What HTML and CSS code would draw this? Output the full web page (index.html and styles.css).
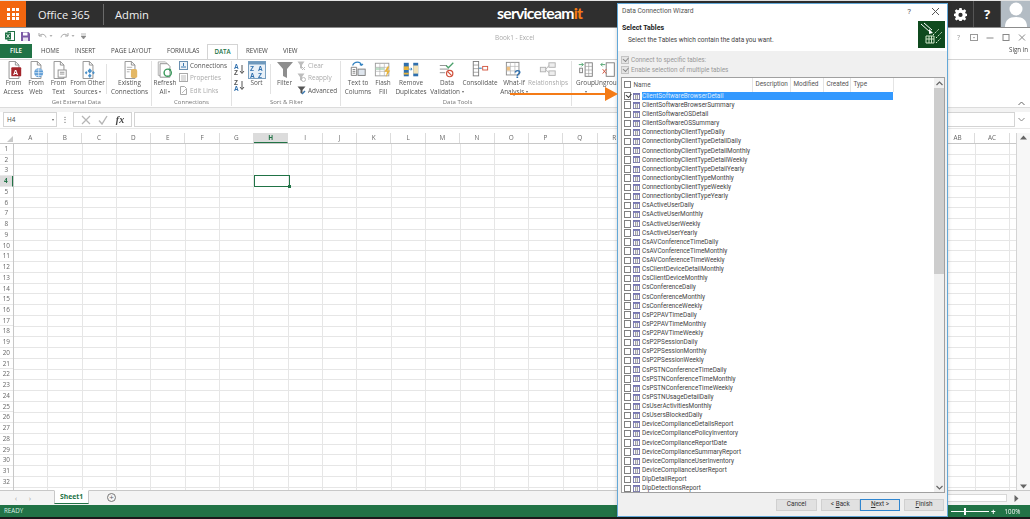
FILE: index.html
```html
<!DOCTYPE html>
<html lang="en">
<head>
<meta charset="utf-8">
<title>Book1 - Excel</title>
<link rel="stylesheet" href="styles.css">
</head>
<body>
<svg class="defs" width="0" height="0" aria-hidden="true">
  <symbol id="t" viewBox="0 0 8 8"><rect x=".5" y=".5" width="7" height="7" fill="#fff" stroke="#7272a8"/><rect x=".5" y=".5" width="7" height="1.6" fill="#6c6cb0"/><path d="M3 2v5.500M5 2v5.500" stroke="#8a8a8a"/></symbol>
  <symbol id="page" viewBox="0 0 18 20"><path d="M3.500.5h7l4 4v15h-11z" fill="#fff" stroke="#8a8a8a"/><path d="M10.500.5v4h4" fill="none" stroke="#8a8a8a"/></symbol>
</svg>
<div class="screen">
  <header class="suite">
    <div class="waffle"><span></span><span></span><span></span><span></span><span></span><span></span><span></span><span></span><span></span></div>
    <div class="suite-name">Office 365</div>
    <div class="suite-app">Admin</div>
    <div class="brand">serviceteam<b>it</b></div>
    <div class="suite-icons">
      <div class="suite-btn"><svg width="13" height="13" viewBox="0 0 16 16"><path d="M6.600 0h2.800l.4 2.200 1.300.6 1.900-1.300 2 2-1.300 1.900.6 1.300 2.200.4v2.800l-2.200.4-.6 1.300 1.300 1.900-2 2-1.900-1.300-1.300.6-.4 2.200H6.600l-.4-2.200-1.300-.6L3 15.500l-2-2 1.300-1.900-.6-1.300L-.5 9.900V7.100l2.200-.4.6-1.300L1 3.500l2-2 1.900 1.300 1.300-.6z" fill="#fff"/><circle cx="8" cy="8.500" r="2.600" fill="#2f2f2f"/></svg></div>
      <div class="suite-btn help">?</div>
      <div class="avatar"><svg width="26" height="27" viewBox="0 0 26 27"><circle cx="13" cy="9" r="6.500" fill="#fff"/><path d="M2 27c0-7 4-10 11-10s11 3 11 10z" fill="#fff"/></svg></div>
    </div>
  </header>

  <div class="qat">
    <svg class="q-x" width="10" height="10" viewBox="0 0 10 10"><rect x="3" y=".5" width="6.500" height="9" fill="#fff" stroke="#217346"/><rect y="1.500" width="6" height="7" fill="#217346"/><path d="M1.500 3l3 4M4.500 3l-3 4" stroke="#fff" stroke-width=".8"/></svg>
    <svg class="q-s" width="9" height="9" viewBox="0 0 9 9"><path d="M0 0h7.500L9 1.500V9H0z" fill="#7d5aa6"/><rect x="2" y=".5" width="4.500" height="3" fill="#fff"/><rect x="2" y="5.500" width="5" height="3.500" fill="#e8e0f0"/></svg>
    <svg class="q-u" width="22" height="8" viewBox="0 0 22 8"><path d="M2 1v3h3M2.200 4C4 1.500 8 1.500 9 5.500" fill="none" stroke="#a8a8a8"/><path d="M12.500 3h3l-1.500 2z" fill="#b0b0b0"/></svg>
    <svg class="q-r" width="22" height="8" viewBox="0 0 22 8"><path d="M9 1v3H6M8.800 4C7 1.500 3 1.500 2 5.500" fill="none" stroke="#a8a8a8"/><path d="M12.500 3h3l-1.500 2z" fill="#b0b0b0"/></svg>
    <svg class="q-m" width="5" height="6" viewBox="0 0 5 6"><path d="M0 1h5M0 3h5l-2.500 3z" fill="#888" stroke="#888" stroke-width=".6"/></svg>
    <div class="doc-title">Book1 - Excel</div>
    <div class="win-btns">
      <span>?</span>
      <svg width="8" height="7" viewBox="0 0 8 7"><rect x=".5" y=".5" width="7" height="6" fill="#fff" stroke="#999"/><path d="M3 3h2L4 4.500z" fill="#888"/></svg>
      <svg width="8" height="7" viewBox="0 0 7 7"><path d="M0 4h7" stroke="#888"/></svg>
      <svg width="8" height="7" viewBox="0 0 7 7"><rect x=".5" y=".5" width="6" height="6" fill="none" stroke="#888"/></svg>
      <svg width="8" height="7" viewBox="0 0 7 7"><path d="M.5.5l6 6M6.500.5l-6 6" stroke="#888"/></svg>
    </div>
  </div>

  <nav class="tabs">
    <span class="tab-file">FILE</span>
    <span class="tab t-home">HOME</span>
    <span class="tab t-ins">INSERT</span>
    <span class="tab t-page">PAGE LAYOUT</span>
    <span class="tab t-form">FORMULAS</span>
    <span class="tab t-data">DATA</span>
    <span class="tab t-rev">REVIEW</span>
    <span class="tab t-view">VIEW</span>
    <span class="signin">Sign in</span>
  </nav>

  <section class="ribbon">
    <div class="group g-ext">
      <div class="items">
        <div class="rb w23"><svg class="ic" viewBox="0 0 18 20"><use href="#page"/><rect x="6" y="7" width="11" height="10" rx="1" fill="#a4262c"/><text x="8" y="15" class="ic-t">A</text></svg><span>From<br>Access</span></div>
        <div class="rb w22"><svg class="ic" viewBox="0 0 18 20"><use href="#page"/><circle cx="12" cy="13" r="5" fill="#5b9bd5"/><path d="M7 13h10M12 8v10M8.500 10h7M8.500 16h7" stroke="#fff" stroke-width=".7"/></svg><span>From<br>Web</span></div>
        <div class="rb w23"><svg class="ic" viewBox="0 0 18 20"><use href="#page"/><rect x="8" y="10" width="9" height="8" fill="#fff" stroke="#8a8a8a"/><path d="M10 12.500h5M10 14.500h5" stroke="#8a8a8a"/></svg><span>From<br>Text</span></div>
        <div class="rb w35"><svg class="ic" viewBox="0 0 18 20"><use href="#page"/><path d="M11 8l2.500 3-2.500 3-2.500-3zM11 14l2 2.500-2 2.500-2-2.500zM7 11l1.500 2L7 15l-1.500-2zM15 11l1.500 2-1.500 2-1.500-2z" fill="#4a90c8"/></svg><span>From Other<br>Sources <i class="dd"></i></span></div>
        <div class="vsep"></div>
        <div class="rb w43"><svg class="ic" viewBox="0 0 18 20"><use href="#page"/><path d="M5.500 7h6M5.500 9.500h6M5.500 12h3" stroke="#aaa"/><rect x="10" y="9" width="7" height="10" rx="2" fill="#e3b764"/></svg><span>Existing<br>Connections</span></div>
      </div>
      <div class="g-label">Get External Data</div>
    </div>

    <div class="group g-conn">
      <div class="items">
        <div class="rb w25"><svg class="ic" viewBox="0 0 18 20"><path d="M1.500 1h8l3 3v12h-11z" fill="#fff" stroke="#aaa"/><path d="M3.500 3h8l3 3v12h-11z" fill="#fff" stroke="#8a8a8a"/><circle cx="12" cy="13" r="4" fill="none" stroke="#3a9a5c" stroke-width="1.600"/><path d="M13 8l3 1.500-2 2z" fill="#3a9a5c"/></svg><span>Refresh<br>All <i class="dd"></i></span></div>
        <ul class="small-list">
          <li><svg viewBox="0 0 9 9"><rect x=".5" y=".5" width="8" height="8" fill="#eef3f8" stroke="#6a8fb0"/><path d="M2 6h5M4.500 2v3" stroke="#3a78b0"/></svg>Connections</li>
          <li class="off"><svg viewBox="0 0 9 9"><rect x=".5" y=".5" width="8" height="8" fill="#fff" stroke="#aaa"/><path d="M2 3h5M2 5h5M2 7h5" stroke="#bbb"/></svg>Properties</li>
          <li class="off"><svg viewBox="0 0 9 9"><path d="M1.500.5h4l2 2v6h-6z" fill="#fff" stroke="#aaa"/><path d="M3 7l4-4" stroke="#bbb"/></svg>Edit Links</li>
        </ul>
      </div>
      <div class="g-label">Connections</div>
    </div>

    <div class="group g-sort">
      <div class="items">
        <div class="az">
          <svg viewBox="0 0 11 11"><text x="0" y="5" class="mini blue">A</text><text x="0" y="10.500" class="mini">Z</text><path d="M8 1v8M6 7l2 2.500L10 7" fill="none" stroke="#555"/></svg>
          <svg viewBox="0 0 11 11"><text x="0" y="5" class="mini">Z</text><text x="0" y="10.500" class="mini blue">A</text><path d="M8 1v8M6 7l2 2.500L10 7" fill="none" stroke="#555"/></svg>
        </div>
        <div class="rb w20"><svg class="ic" viewBox="0 0 18 18"><rect x=".5" y=".5" width="17" height="17" fill="#e9f1f8" stroke="#7aa0c0"/><rect x=".5" y=".5" width="17" height="3" fill="#6f99bd"/><text x="2" y="10" class="mini blue">Z</text><text x="10" y="10" class="mini blue">A</text><text x="2" y="16.500" class="mini blue">A</text><text x="10" y="16.500" class="mini blue">Z</text></svg><span>Sort</span></div>
        <div class="vsep s2"></div>
        <div class="rb w22 filt"><svg class="ic" viewBox="0 0 18 18"><path d="M1 1h16l-6 7v9l-4-2V8z" fill="#8e8e8e"/></svg><span>Filter</span></div>
        <ul class="small-list sl2">
          <li class="off"><svg viewBox="0 0 9 9"><path d="M.5.5h7L5 4v4L3 7V4z" fill="#bdbdbd"/><path d="M5 6l3 3M8 6L5 9" stroke="#bbb"/></svg>Clear</li>
          <li class="off"><svg viewBox="0 0 9 9"><path d="M.5.5h7L5 4v4L3 7V4z" fill="#bdbdbd"/><circle cx="6.500" cy="6.500" r="2" fill="none" stroke="#bbb"/></svg>Reapply</li>
          <li><svg viewBox="0 0 9 9"><path d="M.5.5h8L5.500 4v4L3.500 7V4z" fill="#555"/><path d="M5 8l3-3" stroke="#3a78b0" stroke-width="1.400"/></svg>Advanced</li>
        </ul>
      </div>
      <div class="g-label">Sort &amp; Filter</div>
    </div>

    <div class="group g-tools">
      <div class="items">
        <div class="rb w27"><svg class="ic" viewBox="0 0 18 20"><path d="M1.500 7h6v9h-6z" fill="#fff" stroke="#7a7a7a"/><path d="M3 9.500h3M3 11.500h3M3 13.500h3" stroke="#7a7a7a"/><rect x="9" y="9" width="8" height="7" fill="#dfe6ee" stroke="#7a7a7a"/><path d="M3 5c2-5 9-5 10 0M13 5l-2-1M13 5l1.500-1.800" fill="none" stroke="#2f80c0" stroke-width="1.300"/></svg><span>Text to<br>Columns</span></div>
        <div class="rb w23"><svg class="ic" viewBox="0 0 18 20"><rect x=".5" y="2.500" width="15" height="14" fill="#fff" stroke="#9a9a9a"/><rect x="1" y="7" width="9" height="3" fill="#bfe0c8"/><path d="M5.500 2.500v14M10.500 2.500v14M.5 7h15M.5 11.500h15" stroke="#b0b0b0" stroke-width=".7"/><path d="M14 6l-3.500 6h3L12 18l5-7.500h-3l2-4.500z" fill="#e8b33a"/></svg><span>Flash<br>Fill</span></div>
        <div class="rb w33"><svg class="ic" viewBox="0 0 18 20"><rect x="1" y="2" width="5.500" height="15" fill="#2f6fad"/><rect x="11.500" y="2" width="5.500" height="15" fill="#2f6fad"/><rect x="1" y="6" width="5.500" height="4" fill="#e8b33a"/><rect x="11.500" y="5" width="5.500" height="9" fill="#f3e3b8"/><rect x="1" y="13" width="5.500" height="2" fill="#e8b33a"/><path d="M7 9h3l-1-1.500M10 9L9 10.500" fill="none" stroke="#2f80c0"/></svg><span>Remove<br>Duplicates</span></div>
        <div class="rb w39"><svg class="ic" viewBox="0 0 18 20"><path d="M1 5h8M1 9h10M1 13h6" stroke="#8a8a8a"/><path d="M8 5l2.500 2.500L16 2" fill="none" stroke="#4aa06a" stroke-width="1.400"/><circle cx="12" cy="14" r="3.500" fill="#fff" stroke="#d0503a" stroke-width="1.300"/><path d="M9.800 11.800l4.400 4.400" stroke="#d0503a" stroke-width="1.300"/></svg><span>Data<br>Validation <i class="dd"></i></span></div>
        <div class="rb w27"><svg class="ic" viewBox="0 0 18 20"><rect x="1.500" y=".5" width="6" height="16" fill="#fff" stroke="#7a7a7a"/><path d="M1.500 4.500h6M1.500 8.500h6M1.500 12.500h6" stroke="#7a7a7a" stroke-width=".7"/><rect x="12" y="6" width="5.500" height="4" fill="#fff" stroke="#d0503a"/><path d="M8 8h3" stroke="#2f80c0" stroke-width="1.200"/></svg><span>Consolidate</span></div>
        <div class="rb w41"><svg class="ic" viewBox="0 0 18 20"><rect x=".5" y="1.500" width="14" height="14" fill="#fff" stroke="#8a8a8a"/><path d="M5 1.500v14M10 1.500v14M.5 6h14M.5 11h14" stroke="#b0b0b0" stroke-width=".7"/><rect x="1" y="6.500" width="3.500" height="4" fill="#f0c080"/><text x="9" y="19" class="q">?</text></svg><span>What-If<br>Analysis <i class="dd"></i></span></div>
        <div class="rb w27 off"><svg class="ic" viewBox="0 0 18 20"><rect x=".5" y="7" width="6" height="5" fill="#eee" stroke="#b0b0b0"/><rect x="10" y="2" width="7" height="5" fill="#eee" stroke="#b0b0b0"/><rect x="10" y="11" width="7" height="5" fill="#eee" stroke="#b0b0b0"/><path d="M6.500 9.500L10 5M6.500 9.500L10 13" stroke="#b0b0b0"/></svg><span>Relationships</span></div>
      </div>
      <div class="g-label">Data Tools</div>
    </div>

    <div class="group g-outline">
      <div class="items">
        <div class="rb w22"><svg class="ic" viewBox="0 0 18 20"><rect x="8" y="2" width="8" height="15" fill="#fff" stroke="#7a7a7a"/><path d="M12 2v15M8 6h8M8 10h8M8 14h8" stroke="#9a9a9a" stroke-width=".7"/><path d="M1 4h5M4 2l2 2-2 2" fill="none" stroke="#4aa06a"/><rect x="2" y="8" width="3" height="5" fill="#fff" stroke="#7a7a7a"/></svg><span>Group<br><i class="dd"></i></span></div>
        <div class="rb w22"><svg class="ic" viewBox="0 0 18 20"><path d="M1 4h5M3 2L1 4l2 2" fill="none" stroke="#4aa06a"/><rect x="7" y="2" width="9" height="15" fill="#fff" stroke="#7a7a7a"/><path d="M3 9l4 5M7 9l-4 5" stroke="#d0503a"/></svg><span>Ungroup</span></div>
      </div>
    </div>
    <svg class="collapse" width="7" height="5" viewBox="0 0 7 5"><path d="M.5 4l3-3 3 3" fill="none" stroke="#666"/></svg>
  </section>

  <div class="formula">
    <div class="namebox">H4<i class="dd"></i></div>
    <div class="fdots"></div>
    <div class="fbtns">
      <svg width="10" height="10" viewBox="0 0 10 10"><path d="M1 1l8 8M9 1L1 9" stroke="#b5b5b5" stroke-width="1.200"/></svg>
      <svg width="10" height="10" viewBox="0 0 10 10"><path d="M1 5.500L4 9l5-8" fill="none" stroke="#b5b5b5" stroke-width="1.400"/></svg>
      <em>fx</em>
    </div>
    <div class="finput"></div>
    <svg class="fexpand" width="7" height="5" viewBox="0 0 7 5"><path d="M.5 1l3 3 3-3" fill="none" stroke="#888"/></svg>
  </div>

  <section class="sheet">
    <div class="gridwrap">
      <div class="colheads">
        <div class="corner"></div>
        <span>A</span><span>B</span><span>C</span><span>D</span><span>E</span><span>F</span><span>G</span><span class="on">H</span><span>I</span><span>J</span><span>K</span><span>L</span><span>M</span><span>N</span><span>O</span><span>P</span><span>Q</span><span>R</span><span>S</span><span>T</span><span>U</span><span>V</span><span>W</span><span>X</span><span>Y</span><span>Z</span><span>AA</span><span>AB</span><span>AC</span>
      </div>
      <div class="gridbody">
        <div class="rowheads">
          <span>1</span><span>2</span><span>3</span><span class="on">4</span><span>5</span><span>6</span><span>7</span><span>8</span><span>9</span><span>10</span><span>11</span><span>12</span><span>13</span><span>14</span><span>15</span><span>16</span><span>17</span><span>18</span><span>19</span><span>20</span><span>21</span><span>22</span><span>23</span><span>24</span><span>25</span><span>26</span><span>27</span><span>28</span><span>29</span><span>30</span><span>31</span><span>32</span><span class="cutrow"></span>
        </div>
        <div class="cells"><div class="cursor"></div></div>
      </div>
    </div>
    <div class="vscroll">
      <svg width="7" height="5" viewBox="0 0 7 5"><path d="M0 4.500l3.500-4 3.500 4z" fill="#666"/></svg>
      <svg width="7" height="5" viewBox="0 0 7 5"><path d="M0 .5l3.500 4 3.500-4z" fill="#666"/></svg>
    </div>
  </section>

  <div class="sheet-tabs">
    <span class="nav-arrow">‹</span><span class="nav-arrow">›</span>
    <span class="sheet-tab">Sheet1</span>
    <span class="add-sheet">+</span>
    <div class="hscroll"><i></i><svg width="5" height="7" viewBox="0 0 5 7"><path d="M.5 0l4 3.500-4 3.500z" fill="#666"/></svg></div>
  </div>

  <footer class="status">
    <span>READY</span>
    <div class="zoom"><i class="line"></i><b>+</b><span>100%</span></div>
  </footer>
  <div class="edge"></div>

  <svg class="arrow" width="108" height="14" viewBox="0 0 108 14"><path d="M0 6h95V0l13 7-13 7V8H0z" fill="#f47b16"/></svg>

  <aside class="dialog">
    <div class="dlg-head">
      <div class="dlg-title"><span>Data Connection Wizard</span><span class="dlg-q">?</span><svg width="9" height="9" viewBox="0 0 9 9"><path d="M1 1l7 7M8 1L1 8" stroke="#555"/></svg></div>
      <div class="dlg-sub">
        <div>
          <h2>Select Tables</h2>
          <p>Select the Tables which contain the data you want.</p>
        </div>
        <svg class="dlg-logo" width="27" height="27" viewBox="0 0 27 27"><rect width="27" height="27" fill="#0f4a1e"/><path d="M3 3l9 8M6 2l8 7" stroke="#fff"/><path d="M11 8l4 4-4 1z" fill="#fff"/><path d="M8 22V15h8v7zM11 15v7M13.500 15v7M8 18h8" fill="none" stroke="#cfe6c8"/><path d="M15 14l6-6M18 17l6-6M18 22l5-5" stroke="#dcefd6" stroke-dasharray="1.500 1"/></svg>
      </div>
    </div>
    <div class="dlg-body">
      <label class="opt"><i class="cb dis"></i>Connect to specific tables:</label>
      <label class="opt"><i class="cb dis"></i>Enable selection of multiple tables</label>
      <div class="listbox">
        <div class="list-main">
          <div class="list-head">
            <span class="h-name"><i class="cb"></i>Name</span><span class="h-desc">Description</span><span class="h-mod">Modified</span><span class="h-cre">Created</span><span class="h-typ">Type</span>
          </div>
          <ul class="rows">
            <li class="sel"><i class="cb chk"></i><svg class="ti"><use href="#t"/></svg><span>ClientSoftwareBrowserDetail</span></li>
            <li><i class="cb"></i><svg class="ti"><use href="#t"/></svg><span>ClientSoftwareBrowserSummary</span></li>
            <li><i class="cb"></i><svg class="ti"><use href="#t"/></svg><span>ClientSoftwareOSDetail</span></li>
            <li><i class="cb"></i><svg class="ti"><use href="#t"/></svg><span>ClientSoftwareOSSummary</span></li>
            <li><i class="cb"></i><svg class="ti"><use href="#t"/></svg><span>ConnectionbyClientTypeDaily</span></li>
            <li><i class="cb"></i><svg class="ti"><use href="#t"/></svg><span>ConnectionbyClientTypeDetailDaily</span></li>
            <li><i class="cb"></i><svg class="ti"><use href="#t"/></svg><span>ConnectionbyClientTypeDetailMonthly</span></li>
            <li><i class="cb"></i><svg class="ti"><use href="#t"/></svg><span>ConnectionbyClientTypeDetailWeekly</span></li>
            <li><i class="cb"></i><svg class="ti"><use href="#t"/></svg><span>ConnectionbyClientTypeDetailYearly</span></li>
            <li><i class="cb"></i><svg class="ti"><use href="#t"/></svg><span>ConnectionbyClientTypeMonthly</span></li>
            <li><i class="cb"></i><svg class="ti"><use href="#t"/></svg><span>ConnectionbyClientTypeWeekly</span></li>
            <li><i class="cb"></i><svg class="ti"><use href="#t"/></svg><span>ConnectionbyClientTypeYearly</span></li>
            <li><i class="cb"></i><svg class="ti"><use href="#t"/></svg><span>CsActiveUserDaily</span></li>
            <li><i class="cb"></i><svg class="ti"><use href="#t"/></svg><span>CsActiveUserMonthly</span></li>
            <li><i class="cb"></i><svg class="ti"><use href="#t"/></svg><span>CsActiveUserWeekly</span></li>
            <li><i class="cb"></i><svg class="ti"><use href="#t"/></svg><span>CsActiveUserYearly</span></li>
            <li><i class="cb"></i><svg class="ti"><use href="#t"/></svg><span>CsAVConferenceTimeDaily</span></li>
            <li><i class="cb"></i><svg class="ti"><use href="#t"/></svg><span>CsAVConferenceTimeMonthly</span></li>
            <li><i class="cb"></i><svg class="ti"><use href="#t"/></svg><span>CsAVConferenceTimeWeekly</span></li>
            <li><i class="cb"></i><svg class="ti"><use href="#t"/></svg><span>CsClientDeviceDetailMonthly</span></li>
            <li><i class="cb"></i><svg class="ti"><use href="#t"/></svg><span>CsClientDeviceMonthly</span></li>
            <li><i class="cb"></i><svg class="ti"><use href="#t"/></svg><span>CsConferenceDaily</span></li>
            <li><i class="cb"></i><svg class="ti"><use href="#t"/></svg><span>CsConferenceMonthly</span></li>
            <li><i class="cb"></i><svg class="ti"><use href="#t"/></svg><span>CsConferenceWeekly</span></li>
            <li><i class="cb"></i><svg class="ti"><use href="#t"/></svg><span>CsP2PAVTimeDaily</span></li>
            <li><i class="cb"></i><svg class="ti"><use href="#t"/></svg><span>CsP2PAVTimeMonthly</span></li>
            <li><i class="cb"></i><svg class="ti"><use href="#t"/></svg><span>CsP2PAVTimeWeekly</span></li>
            <li><i class="cb"></i><svg class="ti"><use href="#t"/></svg><span>CsP2PSessionDaily</span></li>
            <li><i class="cb"></i><svg class="ti"><use href="#t"/></svg><span>CsP2PSessionMonthly</span></li>
            <li><i class="cb"></i><svg class="ti"><use href="#t"/></svg><span>CsP2PSessionWeekly</span></li>
            <li><i class="cb"></i><svg class="ti"><use href="#t"/></svg><span>CsPSTNConferenceTimeDaily</span></li>
            <li><i class="cb"></i><svg class="ti"><use href="#t"/></svg><span>CsPSTNConferenceTimeMonthly</span></li>
            <li><i class="cb"></i><svg class="ti"><use href="#t"/></svg><span>CsPSTNConferenceTimeWeekly</span></li>
            <li><i class="cb"></i><svg class="ti"><use href="#t"/></svg><span>CsPSTNUsageDetailDaily</span></li>
            <li><i class="cb"></i><svg class="ti"><use href="#t"/></svg><span>CsUserActivitiesMonthly</span></li>
            <li><i class="cb"></i><svg class="ti"><use href="#t"/></svg><span>CsUsersBlockedDaily</span></li>
            <li><i class="cb"></i><svg class="ti"><use href="#t"/></svg><span>DeviceComplianceDetailsReport</span></li>
            <li><i class="cb"></i><svg class="ti"><use href="#t"/></svg><span>DeviceCompliancePolicyInventory</span></li>
            <li><i class="cb"></i><svg class="ti"><use href="#t"/></svg><span>DeviceComplianceReportDate</span></li>
            <li><i class="cb"></i><svg class="ti"><use href="#t"/></svg><span>DeviceComplianceSummaryReport</span></li>
            <li><i class="cb"></i><svg class="ti"><use href="#t"/></svg><span>DeviceComplianceUserInventory</span></li>
            <li><i class="cb"></i><svg class="ti"><use href="#t"/></svg><span>DeviceComplianceUserReport</span></li>
            <li><i class="cb"></i><svg class="ti"><use href="#t"/></svg><span>DlpDetailReport</span></li>
            <li><i class="cb"></i><svg class="ti"><use href="#t"/></svg><span>DlpDetectionsReport</span></li>
          </ul>
        </div>
        <div class="list-scroll">
          <svg width="7" height="5" viewBox="0 0 7 5"><path d="M.5 4l3-3 3 3" fill="none" stroke="#666" stroke-width="1.200"/></svg>
          <div class="thumb-track"><div class="thumb"></div></div>
          <svg width="7" height="5" viewBox="0 0 7 5"><path d="M.5 1l3 3 3-3" fill="none" stroke="#666" stroke-width="1.200"/></svg>
        </div>
      </div>
      <div class="dlg-foot">
        <button class="b-cancel">Cancel</button>
        <button class="b-back">&lt; <u>B</u>ack</button>
        <button class="b-next"><u>N</u>ext &gt;</button>
        <button class="b-finish"><u>F</u>inish</button>
      </div>
    </div>
  </aside>
</div>
</body>
</html>
```
FILE: styles.css
```css
* { box-sizing: border-box; }
html, body { margin: 0; padding: 0; background: #fff; }
body { width: 1030px; height: 519px; overflow: hidden; font-family: "Open Sans", "Noto Sans", sans-serif; color: #444; font-size: 6.400px; }
.defs { position: absolute; }
ul { list-style: none; margin: 0; padding: 0; }
i, em { font-style: normal; }
.screen { position: relative; width: 1030px; height: 519px; display: flex; flex-direction: column; overflow: hidden; filter: blur(.4px); }

/* Office 365 bar */
.suite { flex: 0 0 28px; display: flex; align-items: center; background: #2f2f2f; border-top: 1px solid #e4e4e4; border-bottom: 1px solid #8c8c8c; color: #f0f0f0; }
.waffle { width: 26px; height: 100%; background: #f2660f; display: grid; grid-template-columns: repeat(3, 3px); grid-auto-rows: 3px; gap: 1.500px; place-content: center; }
.waffle span { background: #fff; }
.suite-name { margin-left: 12px; width: 66px; height: 21px; font-size: 11px; line-height: 21px; border-right: 1px solid #6a6a6a; }
.suite-app { margin-left: 11px; font-size: 11.200px; }
.brand { position: absolute; left: 497px; top: 2px; font-family: "Lato", sans-serif; font-size: 15.800px; line-height: 21px; font-weight: 700; color: #fff; letter-spacing: -.75px; }
.brand b { color: #f47b16; }
.suite-icons { position: absolute; left: 947px; top: 1px; height: 26px; display: flex; }
.suite-btn { width: 27px; display: flex; align-items: center; justify-content: center; border-right: 1px solid #555; color: #fff; }
.help { font-size: 13px; font-weight: 700; }
.avatar { width: 30px; background: #b3bcc4; display: flex; justify-content: center; align-items: flex-end; overflow: hidden; }

/* Quick access */
.qat { flex: 0 0 16px; display: flex; align-items: center; position: relative; padding-left: 5px; }
.q-x { margin-right: 6px; }
.q-s { margin-right: 7px; }
.doc-title { position: absolute; left: 495px; top: 4.500px; font-size: 6.400px; color: #aaa; line-height: 9px; }
.win-btns { position: absolute; left: 954.500px; top: 5px; display: flex; gap: 7.750px; align-items: center; height: 8px; color: #999; font-size: 7px; }
.win-btns > * { width: 8px; flex: none; text-align: center; }

/* Tabs */
.tabs { flex: 0 0 15px; position: relative; display: flex; font-size: 6.200px; line-height: 14px; color: #444; }
.tab-file { width: 32px; height: 14px; background: #217346; color: #fff; font-weight: 600; text-align: center; }
.tab { position: absolute; top: 0; }
.t-home { left: 41px; }
.t-ins { left: 75px; }
.t-page { left: 111px; }
.t-form { left: 167px; }
.t-data { left: 207px; width: 31px; height: 15px; text-align: center; color: #217346; background: #fff; border: 1px solid #d4d4d4; border-bottom: 0; line-height: 13px; font-weight: 600; z-index: 1; }
.t-rev { left: 246px; }
.t-view { left: 283px; }
.signin { position: absolute; left: 1009px; top: -1px; }

/* Ribbon */
.ribbon { flex: 0 0 49px; position: relative; display: flex; border-top: 1px solid #d4d4d4; border-bottom: 1px solid #dcdcdc; padding-top: 1px; background: #fff; }
.group { display: flex; flex-direction: column; border-right: 1px solid #e2e2e2; height: 45px; }
.items { flex: 1; display: flex; align-items: flex-start; }
.g-label { text-align: center; font-size: 6px; line-height: 8px; color: #777; }
.g-ext { width: 151.500px; padding-left: 2px; }
.g-conn { width: 80px; padding-left: 1px; }
.g-sort { width: 109px; padding-left: 2px; }
.g-tools { width: 231px; padding-left: 4px; }
.g-outline { width: 60px; padding-left: 3px; }
.rb { display: flex; flex-direction: column; align-items: center; text-align: center; line-height: 8.700px; color: #555; white-space: nowrap; flex: none; }
.rb .ic { width: 18px; height: 18px; flex: none; }
.rb.off { color: #aaa; }
.w20 { width: 20px; }
.w22 { width: 22px; }
.w23 { width: 23px; }
.w25 { width: 25px; }
.w27 { width: 27px; }
.w33 { width: 33px; }
.w35 { width: 35px; }
.w39 { width: 39px; }
.w41 { width: 41px; }
.w43 { width: 43px; }
.vsep { width: 1px; height: 30px; background: #e2e2e2; margin: 3px 1px 0; flex: none; }
.vsep.s2 { margin: 3px 3px 0 3px; }
.dd { display: inline-block; width: 0; height: 0; border-left: 1.500px solid transparent; border-right: 1.500px solid transparent; border-top: 2px solid #666; vertical-align: middle; }
.ic-t { font: 700 8px "Liberation Sans", sans-serif; fill: #fff; }
.mini { font: 700 6.500px "Liberation Sans", sans-serif; fill: #555; }
.mini.blue { fill: #2f6fad; }
.q { font: 700 13px "Liberation Sans", sans-serif; fill: #2f6fad; }
.small-list { display: flex; flex-direction: column; gap: 3.300px; margin-left: 1px; }
.small-list li { display: flex; align-items: center; gap: 2.500px; height: 9px; line-height: 9px; color: #555; white-space: nowrap; }
.small-list li.off { color: #aaa; }
.small-list svg { width: 9px; height: 9px; flex: none; }
.az { display: flex; flex-direction: column; gap: 5px; width: 13px; padding-top: 3px; flex: none; }
.az svg { width: 11px; height: 11px; }
.collapse { position: absolute; left: 1018px; top: 41px; }

/* Formula bar */
.formula { flex: 0 0 21px; display: flex; align-items: flex-start; padding: 4px 0 0 3px; background: #fff; border-bottom: 1px solid #e8e8e8; position: relative; box-shadow: inset 0 4px 0 #f3f3f3; }
.namebox { width: 54px; height: 15px; border: 1px solid #d4d4d4; line-height: 13px; padding: 0 2px 0 3px; display: flex; justify-content: space-between; align-items: center; background: #fff; }
.fdots { width: 16px; height: 8px; margin-top: 4px; background: radial-gradient(circle, #999 .6px, transparent .7px) center top / 2px 2.500px repeat-y; }
.fbtns { width: 59px; height: 15px; border: 1px solid #d4d4d4; display: flex; align-items: center; justify-content: space-around; padding: 0 3px; background: #fff; }
.fbtns em { font: italic 700 10px "Liberation Serif", serif; color: #444; }
.finput { width: 881px; height: 15px; margin-left: 2px; border: 1px solid #d4d4d4; background: #fff; }
.fexpand { position: absolute; left: 1018px; top: 9px; }

/* Sheet */
.sheet { flex: 1; min-height: 0; display: flex; overflow: hidden; padding-top: 4px; }
.gridwrap { width: 1017px; display: flex; flex-direction: column; overflow: hidden; border-right: 1px solid #d4d4d4; }
.colheads { flex: 0 0 9.700px; display: flex; color: #666; background: #fff; border-bottom: 1px solid #c8c8c8; line-height: 9.700px; }
.corner { flex: 0 0 13.700px; position: relative; }
.corner::after { content: ""; position: absolute; right: 1px; bottom: 1px; border: 3px solid #c8c8c8; border-top-color: transparent; border-left-color: transparent; }
.colheads span { flex: 0 0 34.350px; text-align: center; border-right: 1px solid #dcdcdc; }
.colheads .on { background: #dcdcdc; color: #217346; font-weight: 700; border-bottom: 1px solid #217346; height: 10px; }
.gridbody { flex: 1; min-height: 0; display: flex; }
.rowheads { flex: 0 0 13.700px; display: flex; flex-direction: column; border-right: 1px solid #c8c8c8; }
.rowheads span { flex: 0 0 10.740px; height: 10.740px; line-height: 9px; text-align: center; color: #666; border-bottom: 1px solid #e8e8e8; }
.rowheads .on { background: #dcdcdc; color: #217346; font-weight: 700; border-right: 1px solid #217346; }
.cells { flex: 1; position: relative; background-image: repeating-linear-gradient(to bottom, transparent 0 9.740px, #e6e6e6 9.740px 10.740px), repeating-linear-gradient(to right, transparent 0 33.350px, #e6e6e6 33.350px 34.350px); }
.cursor { position: absolute; left: 240.500px; top: 31px; width: 35.400px; height: 11.800px; border: 1px solid #217346; }
.cursor::after { content: ""; position: absolute; right: -2px; bottom: -2px; width: 3px; height: 3px; background: #217346; }
.vscroll { flex: 1; display: flex; flex-direction: column; justify-content: space-between; align-items: center; padding: 2px 0 1px; background: #f7f7f7; }

.sheet-tabs { flex: 0 0 15px; display: flex; align-items: flex-start; background: #f4f4f4; border-top: 1px solid #c8c8c8; position: relative; }
.nav-arrow { margin-top: 2px; width: 14px; text-align: center; color: #aaa; font-size: 8px; line-height: 10px; }
.nav-arrow:first-child { margin-left: 9px; }
.sheet-tab { margin-left: 17px; margin-top: -1px; width: 35px; height: 14px; background: #fff; border: 1px solid #c8c8c8; border-top-color: #fff; border-bottom: 1px solid #217346; color: #217346; font-weight: 700; font-size: 6.800px; line-height: 12px; text-align: center; }
.add-sheet { margin-left: 18px; margin-top: 2px; width: 9px; height: 9px; border: 1px solid #777; border-radius: 50%; color: #666; font-size: 8px; line-height: 6.500px; text-align: center; }
.hscroll { position: absolute; left: 947px; top: 1px; width: 83px; height: 12px; display: flex; align-items: center; gap: 7px; }
.hscroll i { width: 60px; height: 8px; background: #fff; border: 1px solid #d8d8d8; }

.status { flex: 0 0 12px; background: #217346; color: #dff0e6; line-height: 11px; font-size: 6.200px; padding-left: 4px; display: flex; justify-content: space-between; }
.zoom { position: absolute; left: 948px; bottom: 2px; height: 12px; display: flex; align-items: center; color: #fff; }
.zoom .line { width: 38px; height: 1px; background: #fff; position: relative; margin-right: 2px; margin-left: 3px; }
.zoom .line::after { content: ""; position: absolute; left: 13px; top: -3px; width: 2px; height: 7px; background: #fff; }
.zoom b { font-size: 8px; margin-right: 9px; }
.edge { flex: 0 0 2px; background: #1a1a1a; }

.arrow { position: absolute; left: 510px; top: 87px; z-index: 3; }

/* Dialog */
.dialog { position: absolute; left: 617px; top: 2.500px; width: 331px; height: 514px; z-index: 2; display: flex; flex-direction: column; border: 1px solid #63a8d8; background: #f0f0f0; box-shadow: 0 0 4px rgba(0, 0, 0, .2); font-family: Roboto, "Open Sans", sans-serif; }
.dlg-head { flex: 0 0 47.500px; background: #fff; padding: 0 0 0 4px; }
.dlg-title { display: flex; align-items: center; height: 13px; line-height: 13px; padding-right: 7px; margin-top: 1.500px; color: #555; font-size: 6.700px; }
.dlg-title span:first-child { flex: 1; }
.dlg-q { margin-right: 20px; font-size: 8px; color: #555; }
.dlg-sub { display: flex; justify-content: space-between; padding-right: 2px; }
.dlg-sub h2 { margin: 5px 0 0; font-size: 7px; line-height: 10px; color: #222; font-weight: 700; }
.dlg-sub p { margin: 3px 0 0 6px; font-size: 6.500px; line-height: 9px; color: #444; }
.dlg-logo { margin-top: 3px; }
.dlg-body { flex: 1; min-height: 0; display: flex; flex-direction: column; padding: 4px 2px 0 3px; background: #f0f0f0; }
.opt { display: flex; align-items: center; gap: 2.500px; height: 10px; color: #999; }
.cb { flex: none; display: block; width: 7.500px; height: 7.500px; border: 1px solid #808080; background: #fff; position: relative; }
.cb.dis { border-color: #c4c4c4; background: #e4e4e4; }
.cb.dis::after, .cb.chk::after { content: ""; position: absolute; left: 1px; top: 0; width: 4px; height: 2.500px; border-left: 1px solid #888; border-bottom: 1px solid #888; transform: rotate(-50deg); }
.cb.chk::after { border-color: #333; }
.listbox { flex: 0 0 416px; display: flex; background: #fff; border: 1px solid #a0a0a0; margin-top: 1.500px; overflow: hidden; }
.list-main { flex: 1; min-width: 0; overflow: hidden; padding-left: 1.500px; }
.list-head { display: flex; height: 14px; line-height: 12px; color: #555; }
.list-head span { border-right: 1px solid #e4e4e4; padding-left: 3px; flex: none; white-space: nowrap; }
.h-name { width: 129px; display: flex; align-items: center; gap: 2.500px; padding-left: 0 !important; }
.h-desc { width: 38px; }
.h-mod { width: 33px; }
.h-cre { width: 27px; }
.h-typ { width: 43px; }
.rows li { height: 9.130px; display: flex; align-items: center; white-space: nowrap; color: #444; }
.rows .cb { margin-right: 2px; }
.ti { width: 7px; height: 7px; flex: none; margin-right: 1.500px; }
.rows span { display: block; line-height: 8.600px; padding-left: .500px; }
.rows .sel span { background: #3399ff; color: #dcecff; width: 251px; }
.list-scroll { flex: 0 0 10px; display: flex; flex-direction: column; align-items: center; justify-content: space-between; background: #f0f0f0; padding: 3px 0 2px; }
.thumb-track { flex: 1; width: 100%; padding-top: 2px; }
.thumb { height: 186px; background: #cdcdcd; }
.dlg-foot { flex: 1; display: flex; align-items: center; padding: 1px 0 0 155px; }
.dlg-foot button { font: 6.400px Roboto, "Open Sans", sans-serif; color: #333; background: #e1e1e1; border: 1px solid #d0d0d0; height: 12px; padding: 0; line-height: 9px; }
.b-cancel { width: 41px; margin-right: 3.500px; }
.b-back { width: 39.500px; }
.dlg-foot .b-next { width: 40px; border: 1px solid #2f86d0; margin-right: 4px; }
.b-finish { width: 40px; }
.cutrow { border-bottom: 0; }
```
